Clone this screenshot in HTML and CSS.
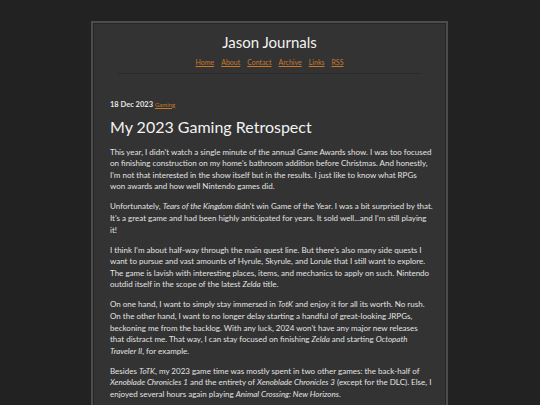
FILE: index.html
```html
<!DOCTYPE html>
<html lang="en">
<head>
<meta charset="utf-8">
<title>Jason Journals</title>
<link rel="stylesheet" href="styles.css">
</head>
<body>
<div class="page">
  <header class="site-header">
    <h1 class="site-title">Jason Journals</h1>
    <nav class="site-nav">
      <a href="#">Home</a>
      <a href="#">About</a>
      <a href="#">Contact</a>
      <a href="#">Archive</a>
      <a href="#">Links</a>
      <a href="#">RSS</a>
    </nav>
  </header>
  <article class="post">
    <div class="post-meta"><span class="post-date">18 Dec 2023</span> <a class="post-tag" href="#">Gaming</a></div>
    <h2 class="post-title">My 2023 Gaming Retrospect</h2>
    <p>This year, I didn't watch a single minute of the annual Game Awards show. I was too focused on finishing construction on my home's bathroom addition before Christmas. And honestly, I'm not that interested in the show itself but in the results. I just like to know what RPGs won awards and how well Nintendo games did.</p>
    <p>Unfortunately, <i>Tears of the Kingdom</i> didn't win Game of the Year. I was a bit surprised by that. It's a great game and had been highly anticipated for years. It sold well...and I'm still playing it!</p>
    <p>I think I'm about half-way through the main quest line. But there's also many side quests I want to pursue and vast amounts of Hyrule, Skyrule, and Lorule that I still want to explore. The game is lavish with interesting places, items, and mechanics to apply on such. Nintendo outdid itself in the scope of the latest <i>Zelda</i> title.</p>
    <p>On one hand, I want to simply stay immersed in <i>TotK</i> and enjoy it for all its worth. No rush. On the other hand, I want to no longer delay starting a handful of great-looking JRPGs, beckoning me from the backlog. With any luck, 2024 won't have any major new releases that distract me. That way, I can stay focused on finishing <i>Zelda</i> and starting <i>Octopath Traveler II</i>, for example.</p>
    <p>Besides <i>ToTK</i>, my 2023 game time was mostly spent in two other games: the back-half of <i>Xenoblade Chronicles 1</i> and the entirety of <i>Xenoblade Chronicles 3</i> (except for the DLC). Else, I enjoyed several hours again playing <i>Animal Crossing: New Horizons</i>.</p>
    <p>Another thing I want for my 2024 gaming is to spend more time with the Switch's older library of games.</p>
  </article>
</div>
</body>
</html>
```
FILE: styles.css
```css
html, body {
  margin: 0;
  padding: 0;
  background: #222222;
}
body {
  font-family: Lato, "Open Sans", sans-serif;
  color: #e2e2e2;
  padding-top: 21px;
}
.page {
  width: 323px;
  margin: 0 0 0 91px;
  background: #333333;
  border: 2px solid #4c4c4c;
  box-shadow: inset 0 0 0 1px #262626;
  padding: 0 13px 40px 17px;
  min-height: 400px;
}
.site-header {
  text-align: center;
  margin: 0 12px 0 8px;
  padding-top: 11px;
  padding-bottom: 6.5px;
  border-bottom: 1px solid #2a2a2a;
}
.site-title {
  margin: 0;
  font-size: 15px;
  font-weight: normal;
  color: #f2f2f2;
  line-height: 16px;
}
.site-nav {
  margin-top: 7.5px;
  font-size: 7px;
  line-height: 9px;
}
.site-nav a {
  color: #c8782c;
  margin: 0 2.6px;
}
.post {
  padding-top: 25.5px;
}
.post-meta {
  font-size: 7.5px;
  line-height: 9px;
}
.post-date {
  font-weight: bold;
  color: #e4e4e4;
}
.post-tag {
  color: #c8782c;
  font-size: 6px;
}
.post-title {
  font-size: 16px;
  font-weight: normal;
  color: #f2f2f2;
  margin: 9.5px 0 10.7px;
  line-height: 18px;
}
.post p {
  font-size: 8px;
  line-height: 11.6px;
  margin: 0 0 8.4px;
}
```
